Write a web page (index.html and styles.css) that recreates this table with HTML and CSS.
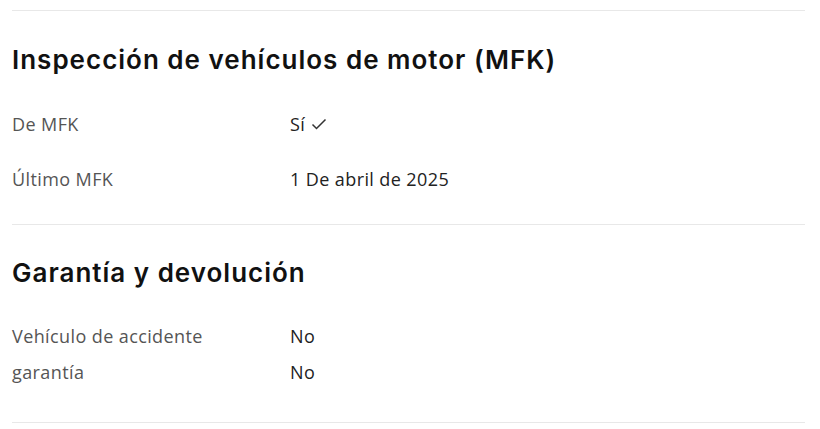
FILE: index.html
```html
<!DOCTYPE html>
<html lang="es">
<head>
<meta charset="utf-8">
<link rel="stylesheet" href="styles.css">
</head>
<body>
<div class="page">
  <section class="section s1">
    <h2 class="title">Inspección de vehículos de motor (MFK)</h2>
    <div class="rows rows-wide">
      <div class="row"><span class="label">De MFK</span><span class="value">Sí <svg class="check" width="16" height="14" viewBox="0 0 16 14"><path d="M1.5 7.5 L5.5 11.5 L14.5 2.5" fill="none" stroke="#333" stroke-width="1.5"/></svg></span></div>
      <div class="row"><span class="label">Último MFK</span><span class="value">1 De abril de 2025</span></div>
    </div>
  </section>
  <section class="section s2">
    <h2 class="title">Garantía y devolución</h2>
    <div class="rows rows-tight">
      <div class="row"><span class="label">Vehículo de accidente</span><span class="value">No</span></div>
      <div class="row"><span class="label">garantía</span><span class="value">No</span></div>
    </div>
  </section>
  <div class="rule"></div>
</div>
</body>
</html>
```
FILE: styles.css
```css
html, body { margin: 0; padding: 0; background: #fff; }
body { font-family: "Open Sans", "Noto Sans", sans-serif; }
.page { padding: 10px 15px 0 12px; }
.section { border-top: 1px solid #e8e8e8; }
.title {
  margin: 0;
  font-family: "Inter", "Noto Sans", sans-serif;
  font-weight: 600;
  font-size: 26px;
  line-height: 32px;
  color: #111;
  letter-spacing: 1px;
}
.s1 .title { margin-top: 33px; }
.s2 .title { margin-top: 32px; }
.rows { display: flex; flex-direction: column; }
.rows-wide { gap: 31px; margin-top: 36px; margin-bottom: 33px; }
.rows-tight { gap: 12px; margin-top: 35px; margin-bottom: 38px; }
.row { display: flex; font-size: 18px; line-height: 24px; letter-spacing: 0.4px; }
.label { width: 278px; color: #555; }
.value { color: #222; display: flex; align-items: center; gap: 6px; }
.check { display: block; }
.rule { border-top: 1px solid #e8e8e8; }
```
